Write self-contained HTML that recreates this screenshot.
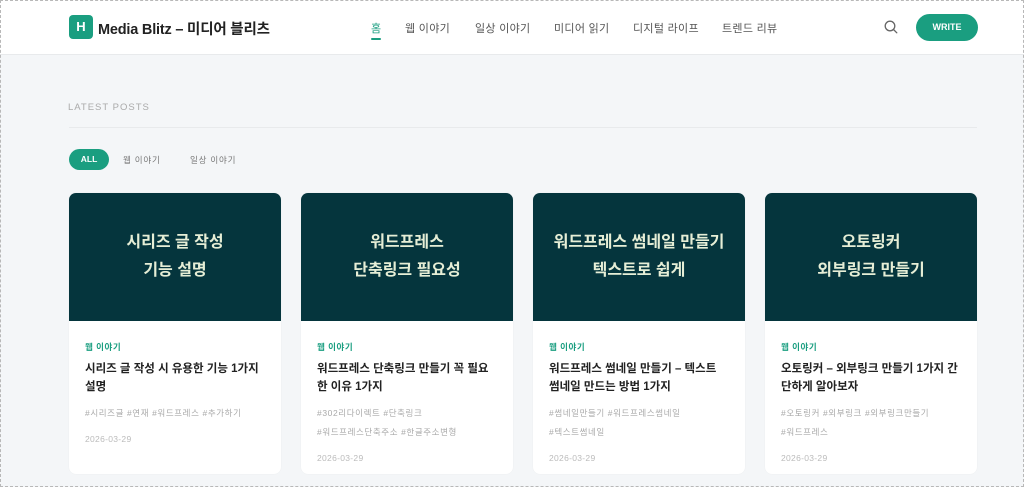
<!DOCTYPE html>
<html><head><meta charset="utf-8"><style>
*{margin:0;padding:0;box-sizing:border-box}
body{width:1024px;height:487px;overflow:hidden;background:#f4f6f8;font-family:"Liberation Sans","Noto Sans CJK KR",sans-serif;position:relative}
.frame{position:absolute;left:0;top:0;width:1024px;height:487px;border:1.5px dashed #b8b8b8;pointer-events:none;z-index:5}
header{position:absolute;left:0;top:0;width:1024px;height:55px;background:#fff;border-bottom:1px solid #e8eaec}
.logo{position:absolute;left:69px;top:15px;width:24px;height:24px;border-radius:4px;background:#1a9e80;color:#fff;font-weight:bold;font-size:13px;text-align:center;line-height:24px}
.title{position:absolute;left:98px;top:18px;font-size:14.5px;font-weight:bold;color:#222;white-space:nowrap;letter-spacing:-.2px}
.nav{position:absolute;top:20px;font-size:11px;color:#555;white-space:nowrap;letter-spacing:.3px}
.nav.on{color:#1a9e80}
.ul{position:absolute;left:371px;top:38px;width:10px;height:2px;background:#1a9e80;border-radius:1px}
.write{position:absolute;left:916px;top:14px;width:62px;height:27px;border-radius:14px;background:#1a9e80;color:#fff;font-size:9px;font-weight:bold;text-align:center;line-height:27px}
.lp{position:absolute;left:68px;top:102px;font-size:9.5px;letter-spacing:1px;color:#aaa}
.hr{position:absolute;left:69px;top:127px;width:908px;height:1px;background:#e8eaec}
.all{position:absolute;left:69px;top:149px;width:40px;height:21px;border-radius:11px;background:#1a9e80;color:#fff;font-size:8.5px;font-weight:bold;text-align:center;line-height:21px}
.f{position:absolute;top:154px;font-size:8.5px;color:#777;letter-spacing:.8px}
.card{position:absolute;top:193px;width:212px;height:281px;background:#fff;border-radius:7px;overflow:hidden;box-shadow:0 0 1px rgba(0,0,0,.08)}
.img{height:128px;background:#05353d;color:#e6eed6;font-size:16px;font-weight:bold;text-align:center;display:flex;align-items:center;justify-content:center;line-height:28px}
.cat{position:absolute;left:16px;top:148px;font-size:8.5px;color:#1a9e80;font-weight:bold;letter-spacing:.5px}
.t{position:absolute;left:16px;top:167px;width:180px;font-size:11.5px;font-weight:bold;color:#222;line-height:18px;word-break:break-all}
.tags{position:absolute;left:16px;top:211px;width:190px;font-size:8.5px;color:#aaa;line-height:19px;letter-spacing:.6px}
.d{font-size:8.5px;color:#bbb;margin-top:7px;letter-spacing:.3px}
</style></head><body>
<div class="frame"></div>
<header>
<div class="logo">H</div>
<div class="title">Media Blitz – 미디어 블리츠</div>
<div class="nav on" style="left:371px">홈</div>
<div class="ul"></div>
<div class="nav" style="left:405px">웹 이야기</div>
<div class="nav" style="left:475px">일상 이야기</div>
<div class="nav" style="left:554px">미디어 읽기</div>
<div class="nav" style="left:633px">디지털 라이프</div>
<div class="nav" style="left:722px">트렌드 리뷰</div>
<svg style="position:absolute;left:884px;top:20px" width="14" height="14" viewBox="0 0 14 14"><circle cx="6" cy="6" r="4.8" fill="none" stroke="#666" stroke-width="1.3"/><path d="M9.5 9.5L12.8 12.8" stroke="#666" stroke-width="1.3" stroke-linecap="round"/></svg>
<div class="write">WRITE</div>
</header>
<div class="lp">LATEST POSTS</div>
<div class="hr"></div>
<div class="all">ALL</div>
<div class="f" style="left:123px">웹 이야기</div>
<div class="f" style="left:190px">일상 이야기</div>

<div class="card" style="left:69px"><div class="img">시리즈 글 작성<br>기능 설명</div>
<div class="cat">웹 이야기</div><div class="t">시리즈 글 작성 시 유용한 기능 1가지 설명</div>
<div class="tags">#시리즈글 #연재 #워드프레스 #추가하기<div class="d">2026-03-29</div></div></div>

<div class="card" style="left:301px"><div class="img">워드프레스<br>단축링크 필요성</div>
<div class="cat">웹 이야기</div><div class="t">워드프레스 단축링크 만들기 꼭 필요한 이유 1가지</div>
<div class="tags">#302리다이렉트 #단축링크<br>#워드프레스단축주소 #한글주소변형<div class="d">2026-03-29</div></div></div>

<div class="card" style="left:533px"><div class="img">워드프레스 썸네일 만들기<br>텍스트로 쉽게</div>
<div class="cat">웹 이야기</div><div class="t">워드프레스 썸네일 만들기 – 텍스트 썸네일 만드는 방법 1가지</div>
<div class="tags">#썸네일만들기 #워드프레스썸네일<br>#텍스트썸네일<div class="d">2026-03-29</div></div></div>

<div class="card" style="left:765px"><div class="img">오토링커<br>외부링크 만들기</div>
<div class="cat">웹 이야기</div><div class="t">오토링커 – 외부링크 만들기 1가지 간단하게 알아보자</div>
<div class="tags">#오토링커 #외부링크 #외부링크만들기<br>#워드프레스<div class="d">2026-03-29</div></div></div>
</body></html>
